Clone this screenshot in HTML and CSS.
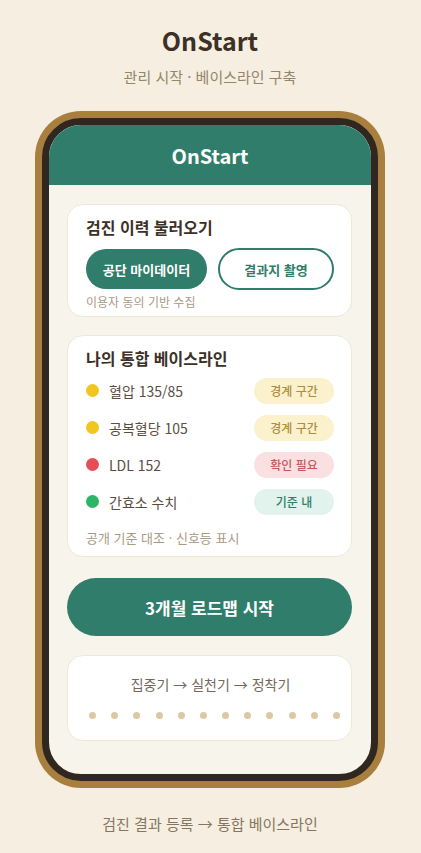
FILE: index.html
```
<!DOCTYPE html>
<html lang="ko">
<head>
    <meta charset="UTF-8">
    <meta name="viewport" content="width=device-width, initial-scale=1.0">
    <title>OnStart</title>
    <link rel="stylesheet" href="styles.css">
</head>
<body>
    <header class="page-header">
        <h1>OnStart</h1>
        <p>관리 시작 · 베이스라인 구축</p>
    </header>

    <main class="phone">
        <div class="screen">
            <div class="app-bar">OnStart</div>
            <div class="content">
                <!-- Import checkup history -->
                <section class="card">
                    <h2>검진 이력 불러오기</h2>
                    <div class="actions">
                        <button type="button" class="btn btn-fill">공단 마이데이터</button>
                        <button type="button" class="btn btn-line">결과지 촬영</button>
                    </div>
                    <p class="note">이용자 동의 기반 수집</p>
                </section>

                <!-- Baseline values -->
                <section class="card baseline">
                    <h2>나의 통합 베이스라인</h2>
                    <ul class="values">
                        <li><span class="light yellow"></span>혈압 135/85<span class="tag tag-yellow">경계 구간</span></li>
                        <li><span class="light yellow"></span>공복혈당 105<span class="tag tag-yellow">경계 구간</span></li>
                        <li><span class="light red"></span>LDL 152<span class="tag tag-red">확인 필요</span></li>
                        <li><span class="light green"></span>간효소 수치<span class="tag tag-green">기준 내</span></li>
                    </ul>
                    <p class="note">공개 기준 대조 · 신호등 표시</p>
                </section>

                <button type="button" class="start">3개월 로드맵 시작</button>

                <!-- 12 weeks -->
                <section class="card roadmap">
                    <p>집중기 → 실천기 → 정착기</p>
                    <div class="weeks">
                        <span></span><span></span><span></span><span></span>
                        <span></span><span></span><span></span><span></span>
                        <span></span><span></span><span></span><span></span>
                    </div>
                </section>
            </div>
        </div>
    </main>

    <footer class="page-footer">검진 결과 등록 → 통합 베이스라인</footer>
</body>
</html>
```

FILE: styles.css
```
* {
    box-sizing: border-box;
}
body {
    margin: 0;
    padding: 23px 36px 18px 35px;
    background-color: #f6efe1;
    color: #3d3026;
    font-family: "Noto Sans CJK KR", sans-serif;
}
h1, h2, p, ul {
    margin: 0;
    padding: 0;
}
button {
    font-family: inherit;
    font-weight: bold;
    cursor: pointer;
}
.page-header {
    text-align: center;
    margin-bottom: 24px;
}
.page-header h1 {
    font-size: 25px;
    line-height: 34px;
}
.page-header p {
    margin-top: 10px;
    font-size: 15px;
    line-height: 20px;
    color: #94856b;
}
.phone {
    padding: 7px;
    background-color: #a87f3f;
    border-radius: 46px;
}
.screen {
    border: 7px solid #302721;
    border-radius: 39px;
    background-color: #f7f4eb;
    overflow: hidden;
}
.app-bar {
    padding-top: 2px;
    background-color: #2f7d6a;
    color: #fff;
    font-size: 20px;
    font-weight: bold;
    line-height: 58px;
    text-align: center;
}
.content {
    padding: 19px 19px 33px 18px;
}
.card {
    padding: 10px 17px 5px 18px;
    background-color: #fff;
    border: 1px solid #f0e8d6;
    border-radius: 16px;
}
.card h2 {
    font-size: 16px;
    line-height: 24px;
}
.actions {
    display: flex;
    align-items: center;
    gap: 11px;
    margin: 9px 0 3px;
}
.btn {
    height: 40px;
    padding: 0;
    border: none;
    border-radius: 21px;
    font-size: 13px;
}
.btn-fill {
    flex: 121;
    background-color: #2f7d6a;
    color: #fff;
}
.btn-line {
    flex: 112;
    height: 42px;
    background-color: #fff;
    border: 2px solid #2f7d6a;
    color: #2f7d6a;
}
.note {
    font-size: 12px;
    line-height: 18px;
    color: #a89b86;
}
.baseline {
    margin-top: 18px;
    padding-bottom: 9px;
}
.baseline .note {
    font-size: 13px;
}
.values {
    margin: 2px 0 9px;
    list-style: none;
}
.values li {
    display: flex;
    align-items: center;
    height: 37px;
    font-size: 14px;
    color: #5b4e41;
}
.light {
    width: 13px;
    height: 13px;
    margin-right: 10px;
    border-radius: 50%;
}
.yellow {
    background-color: #f0c61f;
}
.red {
    background-color: #e64d55;
}
.green {
    background-color: #2bb565;
}
.tag {
    width: 80px;
    margin-left: auto;
    border-radius: 13px;
    font-size: 12px;
    font-weight: 500;
    line-height: 26px;
    text-align: center;
}
.tag-yellow {
    background-color: #fbf1cd;
    color: #b08d3c;
}
.tag-red {
    background-color: #fbe0e1;
    color: #c9575c;
}
.tag-green {
    background-color: #e1f3ec;
    color: #2f7d6a;
}
.start {
    display: block;
    width: 100%;
    height: 58px;
    margin: 21px 0 19px;
    border: none;
    border-radius: 29px;
    background-color: #2f7d6a;
    color: #fff;
    font-size: 17px;
}
.roadmap {
    padding: 18px 11px 21px 21px;
}
.roadmap p {
    padding-right: 8px;
    font-size: 14px;
    line-height: 20px;
    text-align: center;
    color: #75685a;
}
.weeks {
    display: flex;
    justify-content: space-between;
    margin-top: 18px;
}
.weeks span {
    width: 7px;
    height: 7px;
    border-radius: 50%;
    background-color: #dcc9a3;
}
.page-footer {
    margin-top: 25px;
    font-size: 15px;
    line-height: 22px;
    text-align: center;
    color: #85765f;
}
```
